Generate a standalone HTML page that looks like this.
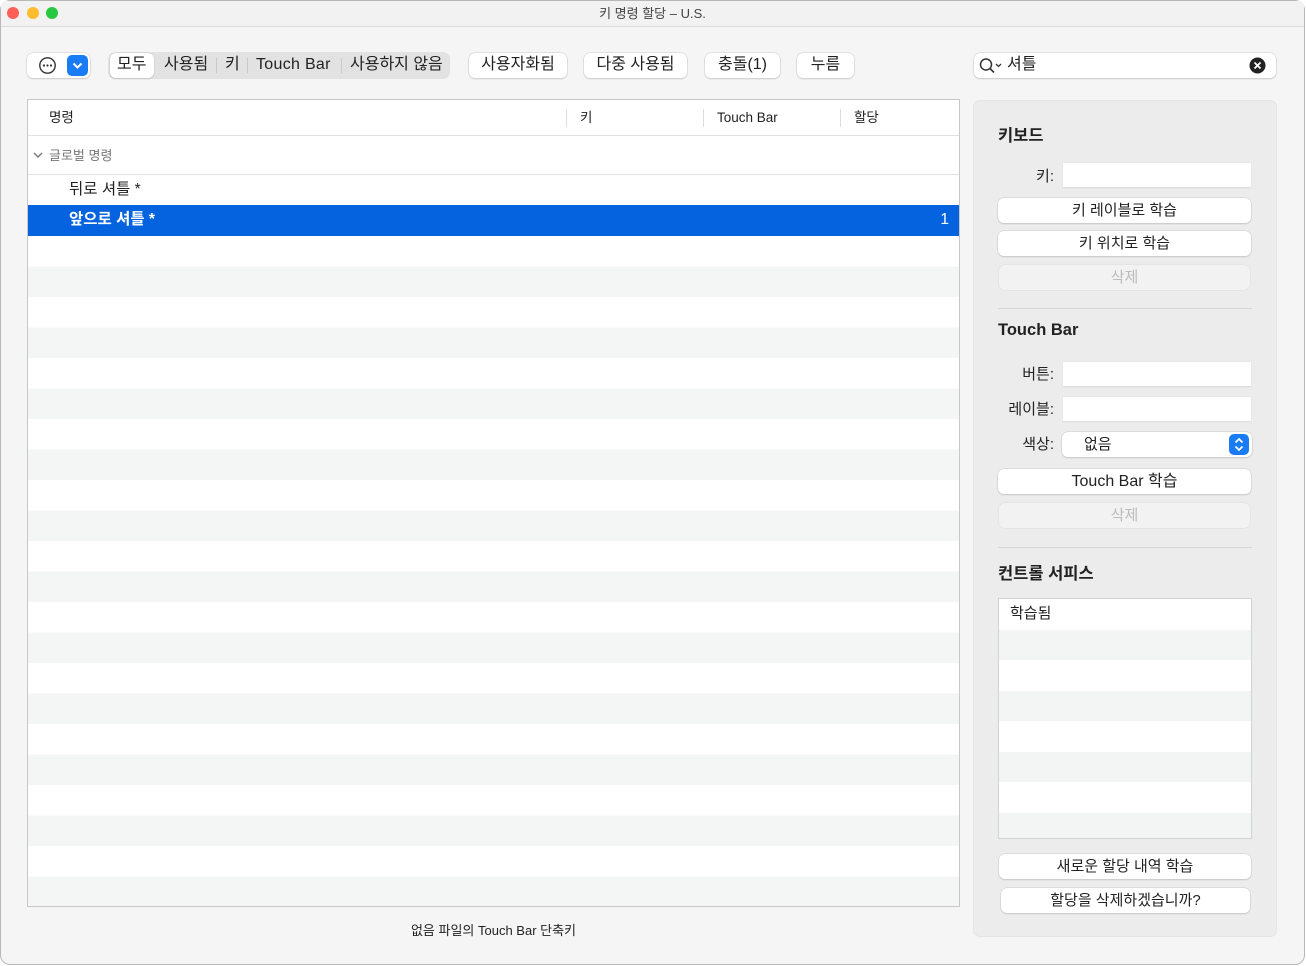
<!DOCTYPE html>
<html><head><meta charset="utf-8"><style>
*{box-sizing:border-box;margin:0;padding:0}
body{width:1306px;height:966px;background:#fff;font-family:"Liberation Sans","Noto Sans CJK KR",sans-serif;color:#222;position:relative;overflow:hidden}
.win{position:absolute;left:0;top:0;width:1305px;height:965px;background:#f5f5f5;box-shadow:inset 0 0 0 1px #b8b8b8;border-radius:10px;overflow:hidden}
.tb{position:absolute;left:1px;top:1px;right:1px;height:26px;background:#f2f2f2;border-bottom:1px solid #dcdcdc;text-align:center;font-size:13px;line-height:25px;color:#444}
.dot{position:absolute;top:7px;width:12px;height:12px;border-radius:50%}
.a{position:absolute}
.btn{position:absolute;height:25px;background:#fff;border-radius:6px;box-shadow:0 0 0 .5px #ccc,0 1px 1.5px rgba(0,0,0,.18);font-size:15px;line-height:25px;text-align:center;color:#222}
.tbtn{font-size:16px;line-height:24px}
.seg{position:absolute;top:53px;font-size:16px;line-height:24px;color:#222}
.sep{position:absolute;top:58px;height:15px;border-left:1px solid #c8c8c8}
.dis{color:#bbb;background:#f2f2f2}
.fld{position:absolute;height:25px;background:#fff;border-bottom:1px solid #ddd;box-shadow:0 0 0 .5px #e2e2e2}
.lbl{position:absolute;font-size:15px;text-align:right;width:60px}
.h{position:absolute;font-size:16.5px;font-weight:bold;color:#222}
</style></head><body>
<div class="win">
<div class="tb">키 명령 할당 – U.S.</div>
<div class="dot" style="left:7px;background:#fe5f57"></div>
<div class="dot" style="left:27px;background:#febc2e"></div>
<div class="dot" style="left:46px;background:#28c840"></div>

<!-- toolbar -->
<div class="btn" style="left:27px;top:53px;width:63px;height:25px"></div>
<svg class="a" style="left:38px;top:56px" width="19" height="19" viewBox="0 0 19 19"><circle cx="9.5" cy="9.5" r="7.7" stroke="#333" stroke-width="1.4" fill="none"/><circle cx="6" cy="9.5" r="1.1" fill="#333"/><circle cx="9.5" cy="9.5" r="1.1" fill="#333"/><circle cx="13" cy="9.5" r="1.1" fill="#333"/></svg>
<div class="a" style="left:67px;top:55px;width:21px;height:21px;background:#1a7cf5;border-radius:5px">
<svg width="21" height="21" viewBox="0 0 21 21"><path d="M6.5 8.5l4 4 4-4" stroke="#fff" stroke-width="2" fill="none"/></svg></div>
<div class="a" style="left:108px;top:52px;width:342px;height:27px;background:#e2e2e2;border-radius:7px"></div>
<div class="btn" style="left:110px;top:53px;width:44px"></div>
<div class="seg" style="left:117px">모두</div>
<div class="seg" style="left:164px">사용됨</div>
<div class="sep" style="left:216px"></div>
<div class="seg" style="left:225px">키</div>
<div class="sep" style="left:247px"></div>
<div class="seg" style="left:256px;letter-spacing:.3px">Touch Bar</div>
<div class="sep" style="left:341px"></div>
<div class="seg" style="left:350px">사용하지 않음</div>
<div class="btn tbtn" style="left:469px;top:53px;width:98px">사용자화됨</div>
<div class="btn tbtn" style="left:584px;top:53px;width:103px">다중 사용됨</div>
<div class="btn tbtn" style="left:705px;top:53px;width:75px">충돌(1)</div>
<div class="btn tbtn" style="left:797px;top:53px;width:57px">누름</div>
<div class="btn tbtn" style="left:974px;top:53px;width:302px;text-align:left;padding-left:33px">셔틀</div>
<svg class="a" style="left:979px;top:57px" width="26" height="18" viewBox="0 0 26 18"><circle cx="7" cy="7.5" r="5.5" stroke="#333" stroke-width="1.5" fill="none"/><path d="M11 11.5l4 4" stroke="#333" stroke-width="1.6"/><path d="M17 7l2.5 2.5 2.5-2.5" stroke="#333" stroke-width="1.3" fill="none"/></svg>
<svg class="a" style="left:1249px;top:57px" width="17" height="17" viewBox="0 0 17 17"><circle cx="8.5" cy="8.5" r="8" fill="#222"/><path d="M5.5 5.5l6 6M11.5 5.5l-6 6" stroke="#fff" stroke-width="1.8"/></svg>

<!-- table -->
<div class="a" style="left:27px;top:99px;width:933px;height:808px;border:1px solid #c8c8c8;background:repeating-linear-gradient(#fff 0,#fff 30.5px,#f4f5f5 30.5px,#f4f5f5 61px);background-position:0 136px;overflow:hidden">
 <div class="a" style="left:0;top:0;width:100%;height:136px;background:#fff"></div>
 <div class="a" style="left:0;top:0;width:100%;height:36px;border-bottom:1px solid #e2e2e2;font-size:13.5px;line-height:36px">
  <span class="a" style="left:21px">명령</span>
  <span class="a" style="left:538px;top:9px;height:18px;border-left:1px solid #ddd"></span>
  <span class="a" style="left:552px">키</span>
  <span class="a" style="left:675px;top:9px;height:18px;border-left:1px solid #ddd"></span>
  <span class="a" style="left:689px">Touch Bar</span>
  <span class="a" style="left:812px;top:9px;height:18px;border-left:1px solid #ddd"></span>
  <span class="a" style="left:826px">할당</span>
 </div>
 <div class="a" style="left:0;top:36px;width:100%;height:39px;border-bottom:1px solid #e2e2e2;font-size:13px;line-height:40px;color:#777;padding-left:21px">글로벌 명령</div>
 <svg class="a" style="left:5px;top:51px" width="10" height="8" viewBox="0 0 10 8"><path d="M1 2l4 4 4-4" stroke="#777" stroke-width="1.4" fill="none"/></svg>
 <div class="a" style="left:41px;top:75px;font-size:15.5px;line-height:30px">뒤로 셔틀 *</div>
 <div class="a" style="left:0;top:105px;width:100%;height:31px;background:#0663e0;color:#fff;font-size:15.5px;font-weight:bold;line-height:30px;padding-left:41px">앞으로 셔틀 *<span style="position:absolute;right:10px;font-weight:normal">1</span></div>
</div>
<div class="a" style="left:0;width:987px;top:920px;text-align:center;font-size:13px">없음 파일의 Touch Bar 단축키</div>

<!-- right panel -->
<div class="a" style="left:973px;top:100px;width:304px;height:837px;background:#ececec;border-radius:7px;border:1px solid #e4e4e4"></div>
<div class="h" style="left:998px;top:122px">키보드</div>
<div class="lbl" style="left:994px;top:165px">키:</div>
<div class="fld" style="left:1063px;top:163px;width:188px"></div>
<div class="btn" style="left:998px;top:198px;width:253px">키 레이블로 학습</div>
<div class="btn" style="left:998px;top:231px;width:253px">키 위치로 학습</div>
<div class="btn dis" style="left:999px;top:265px;width:251px;box-shadow:0 0 0 .5px #ddd">삭제</div>
<div class="a" style="left:998px;top:308px;width:254px;border-top:1px solid #d6d6d6"></div>
<div class="h" style="left:998px;top:321px">Touch Bar</div>
<div class="lbl" style="left:994px;top:363px">버튼:</div>
<div class="fld" style="left:1063px;top:362px;width:188px"></div>
<div class="lbl" style="left:994px;top:398px">레이블:</div>
<div class="fld" style="left:1063px;top:397px;width:188px"></div>
<div class="lbl" style="left:994px;top:433px">색상:</div>
<div class="btn" style="left:1062px;top:432px;width:190px;text-align:left;padding-left:22px">없음</div>
<div class="a" style="left:1229px;top:434px;width:20px;height:21px;background:#1a7cf5;border-radius:5px"><svg width="20" height="21" viewBox="0 0 20 21"><path d="M6.5 8.5l3.5-3.5 3.5 3.5M6.5 12.5l3.5 3.5 3.5-3.5" stroke="#fff" stroke-width="1.7" fill="none"/></svg></div>
<div class="btn" style="left:998px;top:469px;width:253px;font-size:16px">Touch Bar 학습</div>
<div class="btn dis" style="left:999px;top:503px;width:251px;box-shadow:0 0 0 .5px #ddd">삭제</div>
<div class="a" style="left:998px;top:547px;width:254px;border-top:1px solid #d6d6d6"></div>
<div class="h" style="left:998px;top:560px">컨트롤 서피스</div>
<div class="a" style="left:998px;top:598px;width:254px;height:241px;border:1px solid #d2d2d2;background:repeating-linear-gradient(#fff 0,#fff 31px,#f3f4f4 31px,#f3f4f4 61px);font-size:15px;line-height:30px;padding-left:11px">학습됨</div>
<div class="btn" style="left:999px;top:854px;width:252px">새로운 할당 내역 학습</div>
<div class="btn" style="left:1001px;top:888px;width:249px">할당을 삭제하겠습니까?</div>
</div>
</body></html>
